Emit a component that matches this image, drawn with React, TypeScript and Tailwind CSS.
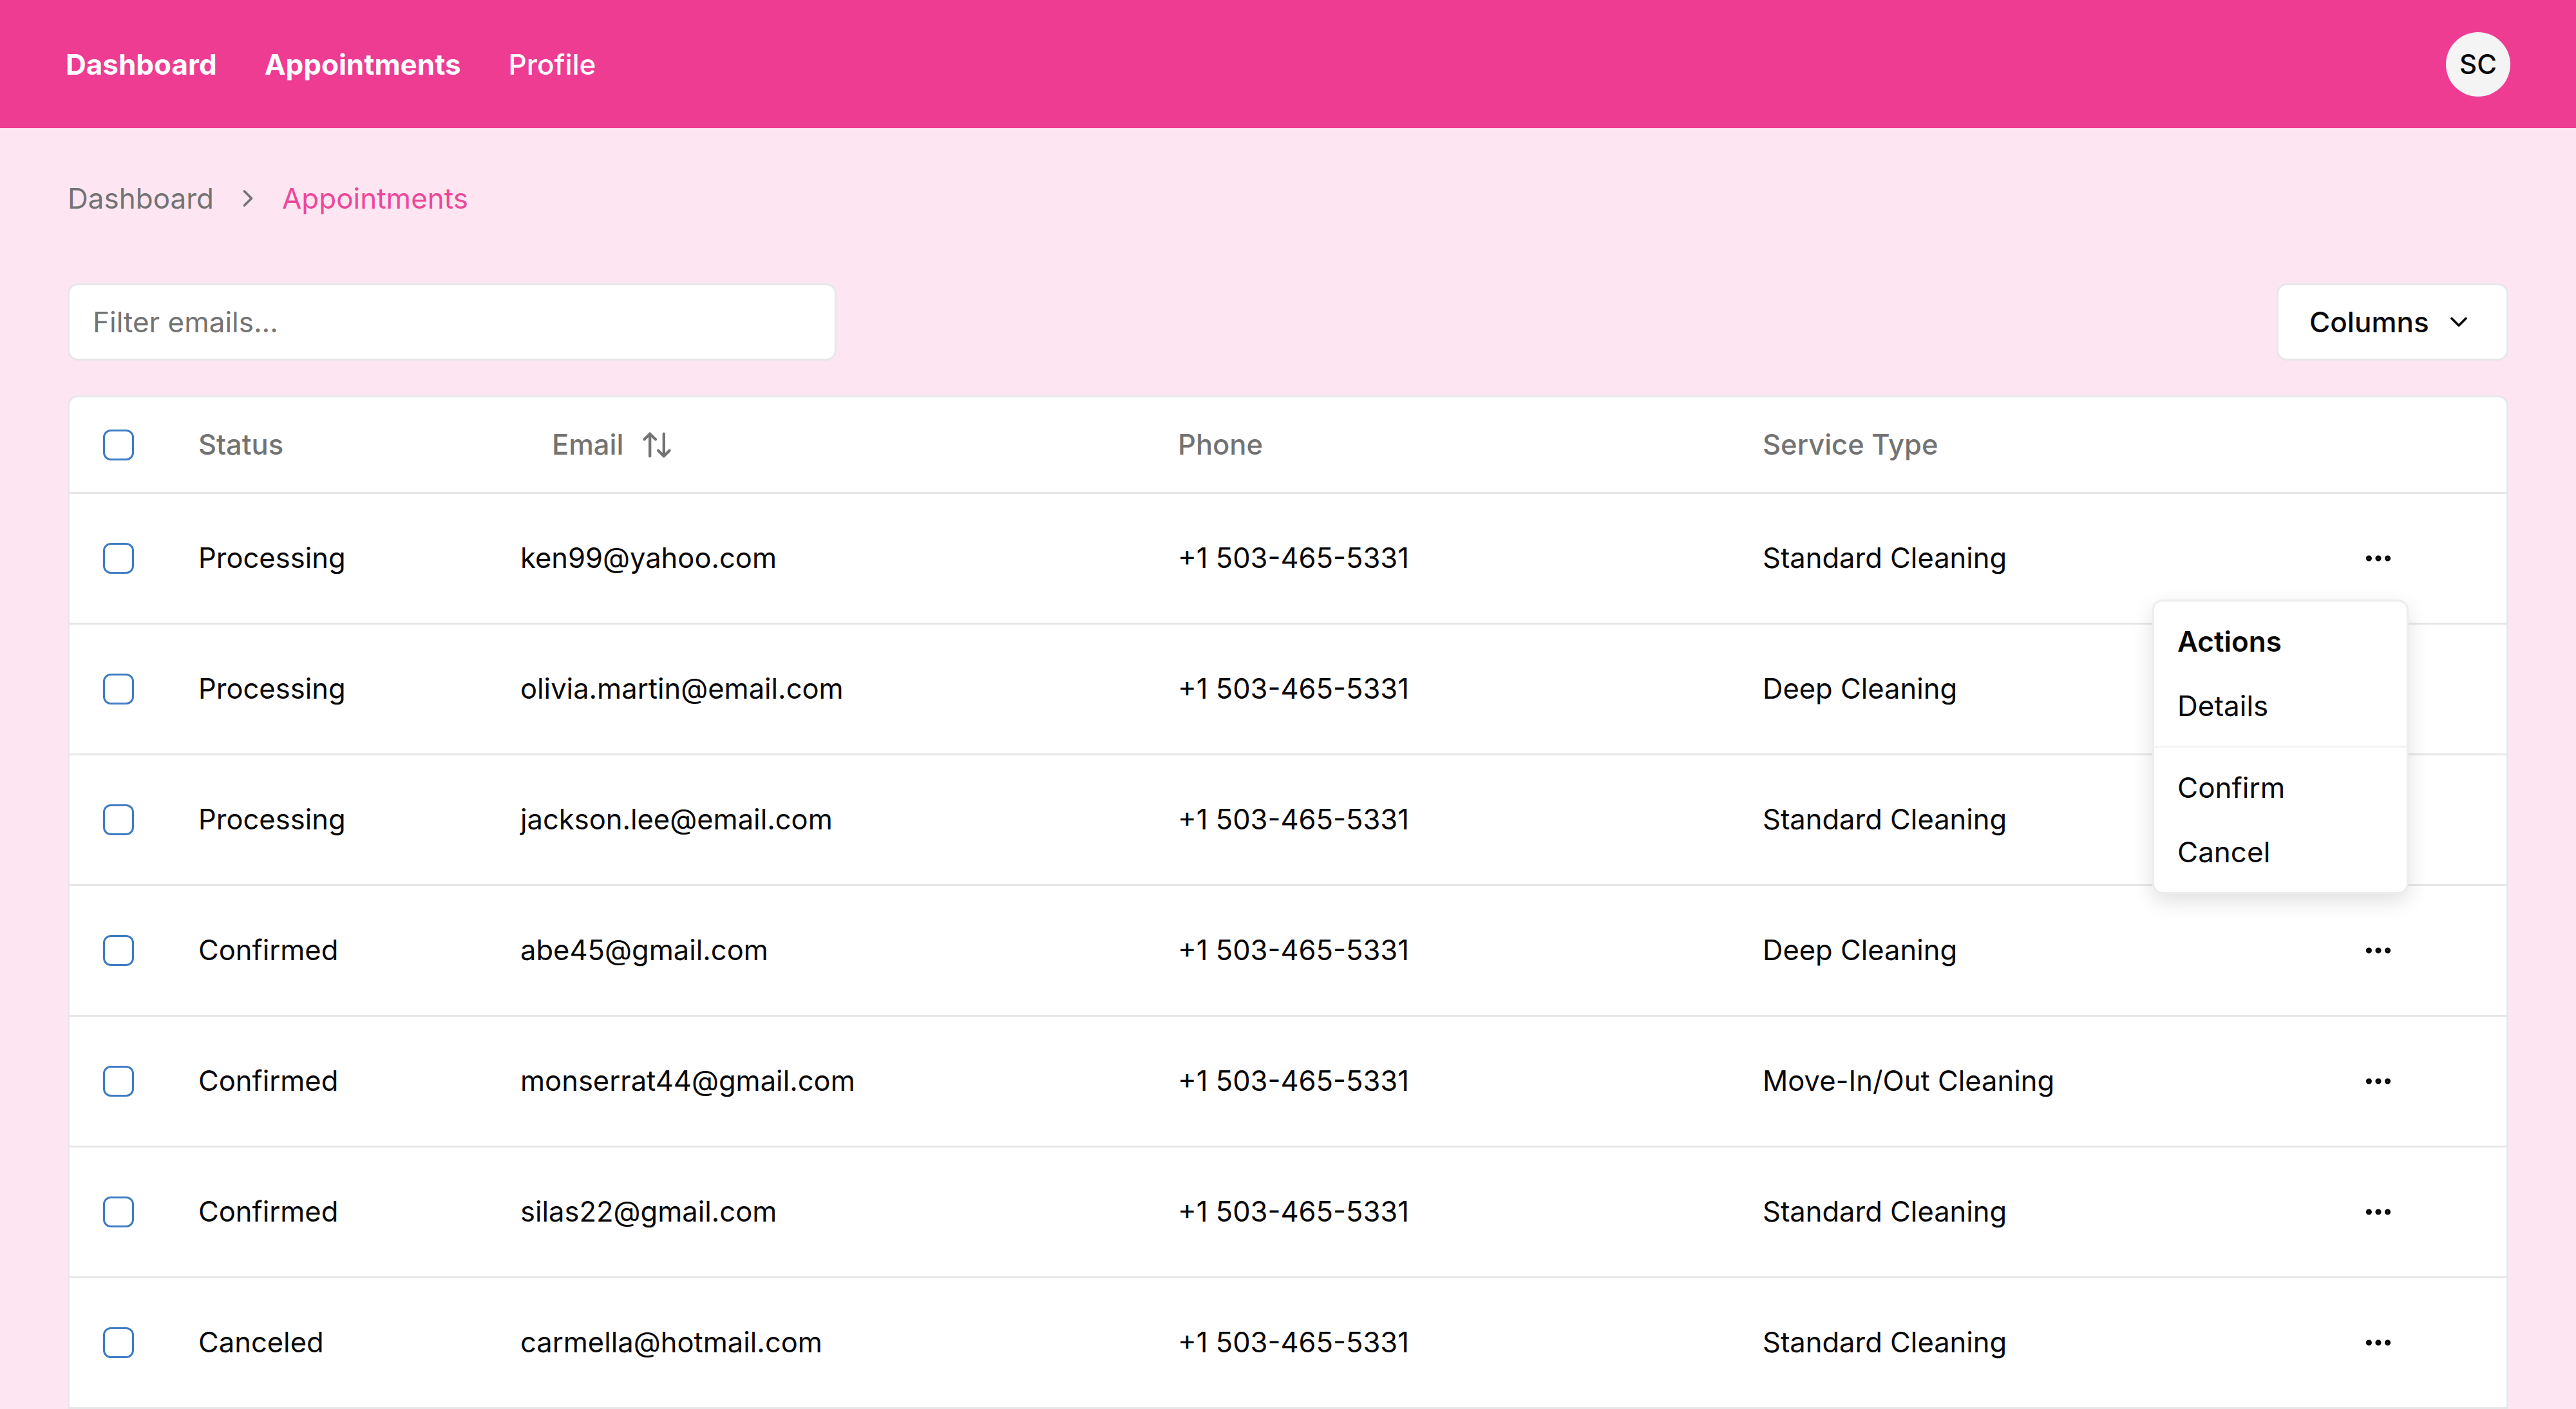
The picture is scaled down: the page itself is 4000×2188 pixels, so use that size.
import { ArrowUpDown, ChevronDown, ChevronRight, MoreHorizontal } from 'lucide-react';

interface Appointment {
  status: string;
  email: string;
  phone: string;
  service: string;
}

const rows: Appointment[] = [
  { status: 'Processing', email: 'ken99@yahoo.com', phone: '+1 503-465-5331', service: 'Standard Cleaning' },
  { status: 'Processing', email: 'olivia.martin@email.com', phone: '+1 503-465-5331', service: 'Deep Cleaning' },
  { status: 'Processing', email: 'jackson.lee@email.com', phone: '+1 503-465-5331', service: 'Standard Cleaning' },
  { status: 'Confirmed', email: 'abe45@gmail.com', phone: '+1 503-465-5331', service: 'Deep Cleaning' },
  { status: 'Confirmed', email: 'monserrat44@gmail.com', phone: '+1 503-465-5331', service: 'Move-In/Out Cleaning' },
  { status: 'Confirmed', email: 'silas22@gmail.com', phone: '+1 503-465-5331', service: 'Standard Cleaning' },
  { status: 'Canceled', email: 'carmella@hotmail.com', phone: '+1 503-465-5331', service: 'Standard Cleaning' },
];

const gridCols = 'grid grid-cols-[200px_500px_1021px_908px_931px_1fr] items-center';

function Checkbox() {
  return <div className="ml-[52px] w-[48px] h-[48px] rounded-[12px] border-[3px] border-[#3f7cc4] bg-white" />;
}

function ActionsMenu() {
  return (
    <div className="absolute right-[152px] top-[314px] w-[398px] p-[12px] bg-white rounded-[16px] border-[3px] border-[#ececee] shadow-[0_12px_32px_rgba(0,0,0,0.12)] text-[44px] leading-[1.5] text-[#09090b]">
      <div className="h-[100px] px-[24px] flex items-center font-semibold">Actions</div>
      <div className="h-[100px] px-[24px] flex items-center">Details</div>
      <div className="-mx-[12px] my-[12px] h-[3px] bg-[#f2f2f3]" />
      <div className="h-[100px] px-[24px] flex items-center">Confirm</div>
      <div className="h-[100px] px-[24px] flex items-center">Cancel</div>
    </div>
  );
}

export default function App() {
  return (
    <div className="h-screen overflow-hidden bg-[#fde6f1] font-['Inter',sans-serif] text-[#09090b]">
      <nav className="h-[199px] px-[102px] flex items-center justify-between bg-[#ee3c93] text-white text-[44px]">
        <div className="flex items-center gap-[74px]">
          <span className="font-bold">Dashboard</span>
          <span className="font-bold">Appointments</span>
          <span className="font-medium">Profile</span>
        </div>
        <div className="w-[100px] h-[100px] rounded-full bg-[#f4f4f5] flex items-center justify-center text-[42px] font-medium text-[#09090b]">
          SC
        </div>
      </nav>

      <main className="px-[105px]">
        <div className="pt-[76px] flex items-center gap-[31px] text-[44px] leading-[66px]">
          <span className="text-[#737373]">Dashboard</span>
          <ChevronRight size={44} strokeWidth={2} className="text-[#737373]" />
          <span className="text-[#ec4899]">Appointments</span>
        </div>

        <div className="mt-[99px] flex items-center justify-between">
          <div className="w-[1194px] h-[120px] rounded-[16px] border-[3px] border-[#e7e7ea] bg-white flex items-center px-[36px] text-[44px] text-[#737373]">
            Filter emails...
          </div>
          <div className="w-[360px] h-[120px] rounded-[16px] border-[3px] border-[#e7e7ea] bg-white flex items-center pl-[48px] gap-[24px] text-[44px] font-medium">
            Columns
            <ChevronDown size={44} strokeWidth={2} />
          </div>
        </div>

        <div className="relative mt-[54px] rounded-t-[16px] border-[3px] border-b-0 border-[#e7e7ea] bg-white text-[43.5px] leading-[1.5]">
          <div className={`${gridCols} h-[150px] border-b-[3px] border-[#e7e7ea] text-[#737373] font-medium`}>
            <Checkbox />
            <span>Status</span>
            <div className="pl-[49px] flex items-center">
              Email
              <ArrowUpDown size={52} strokeWidth={2} className="ml-[25px]" />
            </div>
            <span>Phone</span>
            <span>Service Type</span>
            <span />
          </div>
          {rows.map((r) => (
            <div key={r.email} className={`${gridCols} h-[203px] border-b-[3px] border-[#e7e7ea]`}>
              <Checkbox />
              <span>{r.status}</span>
              <span>{r.email}</span>
              <span>{r.phone}</span>
              <span>{r.service}</span>
              <MoreHorizontal size={50} strokeWidth={2.4} />
            </div>
          ))}
          <ActionsMenu />
        </div>
      </main>
    </div>
  );
}
